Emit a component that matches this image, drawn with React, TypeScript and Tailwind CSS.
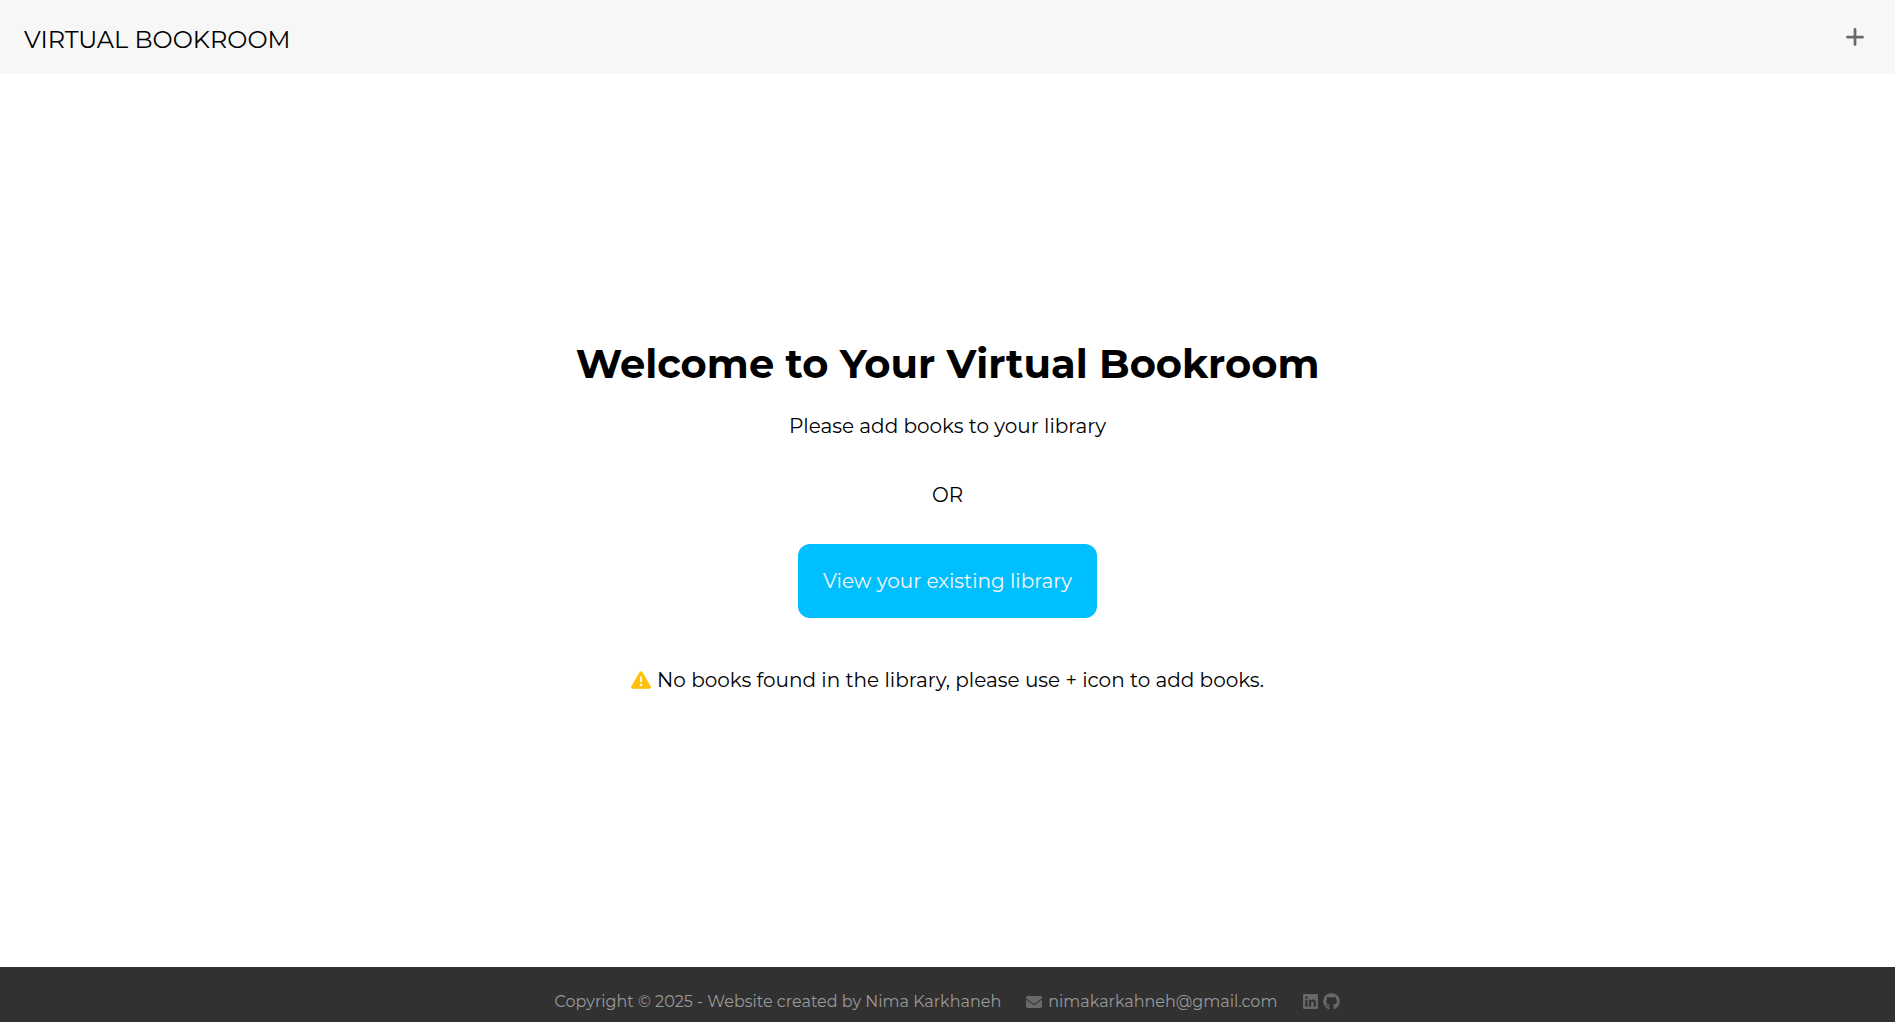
import {
  FaEnvelope,
  FaGithub,
  FaLinkedin,
  FaPlus,
  FaTriangleExclamation,
} from "react-icons/fa6";

function Header() {
  return (
    <header className="flex h-[74px] items-center justify-between bg-[#f7f7f7] px-6">
      <a href="#home" className="pt-1.5 text-2xl font-normal">
        VIRTUAL BOOKROOM
      </a>
      <button type="button" aria-label="Add book" className="px-[5px] text-[#696969]">
        <FaPlus size={22} />
      </button>
    </header>
  );
}

function Welcome() {
  return (
    <main className="flex flex-1 flex-col items-center justify-center pb-2 text-center text-xl leading-7">
      <h1 className="text-[40px] leading-12 font-bold">
        Welcome to Your Virtual Bookroom
      </h1>
      <p className="mt-6">Please add books to your library</p>
      <p className="mt-[41px]">OR</p>
      <button
        type="button"
        className="mt-[35px] rounded-xl bg-[#00bfff] px-[25px] py-[23px] text-[#f7f7f7]"
      >
        View your existing library
      </button>
      <p className="mt-12 flex items-center gap-1.5">
        <FaTriangleExclamation size={20} className="text-[#ffc107]" />
        No books found in the library, please use + icon to add books.
      </p>
    </main>
  );
}

function Footer() {
  return (
    <footer className="flex h-[55px] items-center justify-center gap-[25px] bg-[#313131] pt-3.5 text-base leading-6 text-[#999]">
      <p>Copyright © 2025 - Website created by Nima Karkhaneh</p>
      <a href="mailto:nimakarkahneh@gmail.com" className="flex items-center gap-1.5">
        <FaEnvelope size={16} className="text-[#696969]" />
        nimakarkahneh@gmail.com
      </a>
      <div className="flex items-center gap-1 text-[#696969]">
        <a href="#linkedin" aria-label="LinkedIn">
          <FaLinkedin size={17} />
        </a>
        <a href="#github" aria-label="GitHub">
          <FaGithub size={17} />
        </a>
      </div>
    </footer>
  );
}

export default function App() {
  return (
    <div className="flex min-h-screen flex-col bg-white font-['Montserrat','Inter',sans-serif] text-black">
      <Header />
      <Welcome />
      <Footer />
    </div>
  );
}
